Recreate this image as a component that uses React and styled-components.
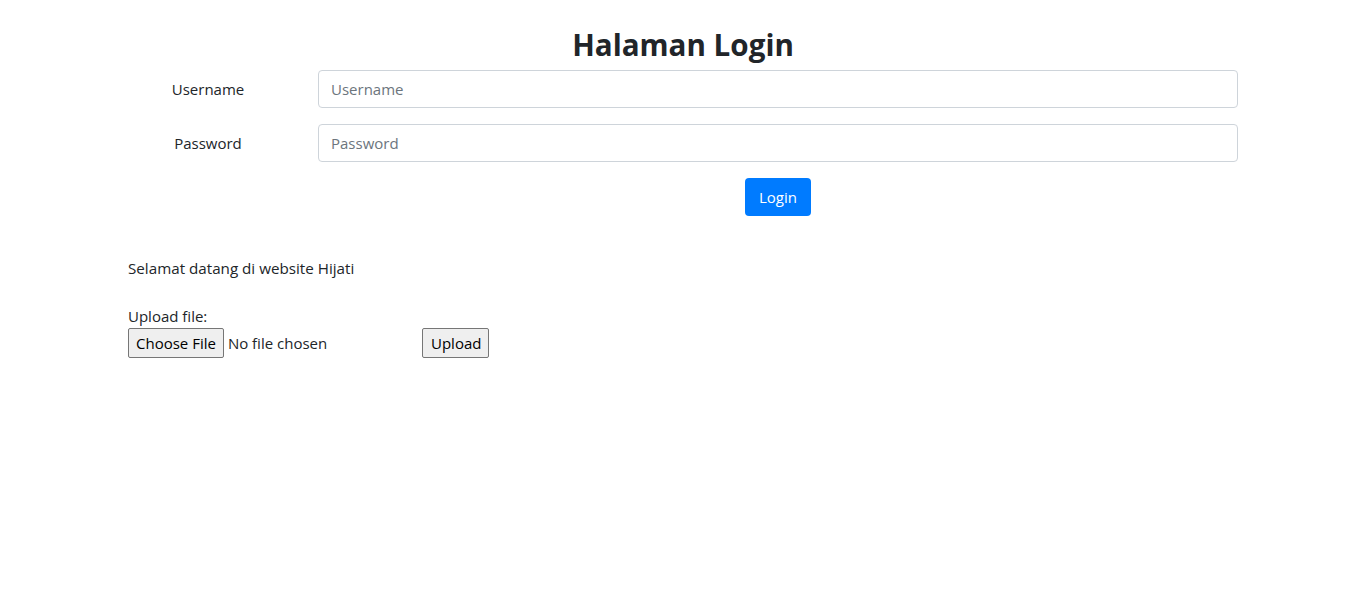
import React from "react";
import styled, { createGlobalStyle } from "styled-components";

const GlobalStyle = createGlobalStyle`
  body {
    margin: 0;
    font-family: "Open Sans", "Noto Sans", sans-serif;
    font-size: 15px;
    line-height: 1.5;
    color: #212529;
    background: #fff;
  }
`;

const Container = styled.div`
  max-width: 1110px;
  margin: 0 auto;
  padding: 0 15px;
`;

const Title = styled.h2`
  margin: 26px 0 6px;
  text-align: center;
  font-size: 29.6px;
  font-weight: 700;
  line-height: 38px;
`;

const FormRow = styled.div`
  display: grid;
  grid-template-columns: 160px 1fr;
  column-gap: 30px;
  align-items: center;
  margin-bottom: 16px;
`;

const Label = styled.label`
  text-align: center;
  font-size: 15px;
`;

const TextInput = styled.input`
  height: 38px;
  box-sizing: border-box;
  padding: 6px 12px;
  border: 1px solid #ced4da;
  border-radius: 4px;
  font-family: inherit;
  font-size: 15px;
  color: #495057;
  &::placeholder {
    color: #6c757d;
  }
`;

const ButtonSlot = styled.div`
  grid-column: 2;
  display: flex;
  justify-content: center;
`;

const PrimaryButton = styled.button`
  height: 38px;
  width: 66px;
  border: none;
  border-radius: 4px;
  background: #007bff;
  color: #fff;
  font-family: inherit;
  font-size: 15px;
`;

const Welcome = styled.p`
  margin: 41px 0 24px;
  font-size: 15.2px;
`;

const UploadLabel = styled.div`
  font-size: 15px;
  line-height: 24px;
`;

const UploadRow = styled.form`
  display: flex;
  align-items: center;
  gap: 4px;
`;

const FileInput = styled.input`
  width: 290px;
  font-family: inherit;
  font-size: 15px;
  &::file-selector-button {
    font-family: inherit;
    font-size: 15px;
    height: 30px;
    padding: 0 7px;
    border: 1px solid #767676;
    border-radius: 2px;
    background: #efefef;
    color: #000;
    margin-right: 4px;
  }
`;

const PlainButton = styled.button`
  height: 30px;
  padding: 0 7px 0 8px;
  border: 1px solid #767676;
  border-radius: 2px;
  background: #efefef;
  color: #000;
  font-family: inherit;
  font-size: 15px;
`;

export default function App() {
  return (
    <>
      <GlobalStyle />
      <Container>
        <Title>Halaman Login</Title>
        <form onSubmit={(e) => e.preventDefault()}>
          <FormRow>
            <Label htmlFor="username">Username</Label>
            <TextInput id="username" type="text" placeholder="Username" />
          </FormRow>
          <FormRow>
            <Label htmlFor="password">Password</Label>
            <TextInput id="password" type="password" placeholder="Password" />
          </FormRow>
          <FormRow>
            <ButtonSlot>
              <PrimaryButton type="submit">Login</PrimaryButton>
            </ButtonSlot>
          </FormRow>
        </form>
        <Welcome>Selamat datang di website Hijati</Welcome>
        <UploadLabel>Upload file:</UploadLabel>
        <UploadRow onSubmit={(e) => e.preventDefault()}>
          <FileInput type="file" />
          <PlainButton type="submit">Upload</PlainButton>
        </UploadRow>
      </Container>
    </>
  );
}
